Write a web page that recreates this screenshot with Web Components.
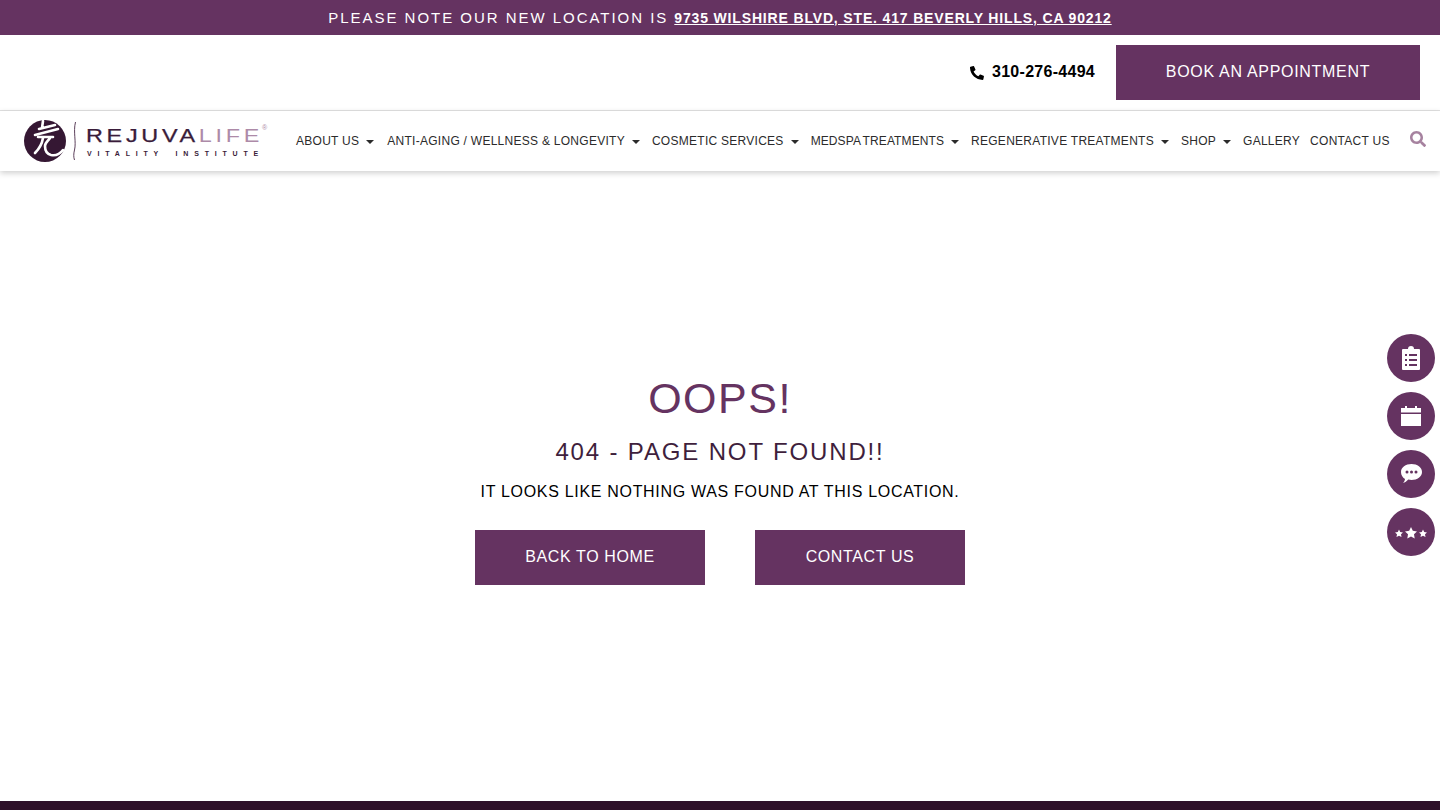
<!DOCTYPE html>
<html lang="en"><head><meta charset="utf-8"><title>Page not found</title>
<style>
html,body{margin:0;padding:0;height:810px;overflow:hidden;background:#fff;font-family:"Liberation Sans",Arial,sans-serif}
body{display:flex;flex-direction:column;position:relative}
</style></head><body>
<site-notice>PLEASE NOTE OUR NEW LOCATION IS <a slot="link" href="#">9735 WILSHIRE BLVD, STE. 417 BEVERLY HILLS, CA 90212</a></site-notice>
<top-bar></top-bar>
<main-nav></main-nav>
<error-panel></error-panel>
<site-footer></site-footer>
<side-actions></side-actions>
<script>
function def(name,html){customElements.define(name,class extends HTMLElement{constructor(){super();this.attachShadow({mode:'open'}).innerHTML=html;}});}
def('site-notice',`<style>:host{display:flex;justify-content:center;align-items:center;gap:6px;height:35px;background:#653361;color:#fff;font-size:15px;letter-spacing:1.97px;flex:none}
::slotted(a){color:#fff;font-weight:700;font-size:14px;letter-spacing:.84px;text-decoration:underline}</style><span><slot></slot></span><slot name="link"></slot>`);
def('top-bar',`<style>:host{display:flex;justify-content:flex-end;align-items:center;height:76px;box-sizing:border-box;padding:0 20px;gap:21px;flex:none;border-bottom:1px solid #e2e2e2}
.ph{display:flex;align-items:center;gap:8px;font-weight:700;font-size:16px;letter-spacing:.28px;color:#000;margin-top:-2px}
svg{width:14px;height:14px;margin-top:3px;transform:scaleX(-1)}
.b{display:flex;align-items:center;justify-content:center;width:304px;height:55px;box-sizing:border-box;padding-bottom:2px;background:#653361;color:#fff;font-size:16px;letter-spacing:.7px;text-decoration:none}</style>
<span class="ph"><svg viewBox="0 0 512 512"><path d="M493 24 389 0c-11-3-23 3-28 14l-48 112c-4 10-1 21 7 28l61 50c-36 76-98 139-175 175l-50-61c-7-8-18-11-28-7L16 359c-11 5-17 17-14 28l24 104c3 11 12 19 23 19 256 0 464-207 464-464 0-11-8-20-20-22z"/></svg>310-276-4494</span><a class="b" href="#">BOOK AN APPOINTMENT</a>`);
def('nav-item',`<style>:host{display:inline-flex;align-items:center;gap:7px;font-size:12px;letter-spacing:.27px;color:#2b2b2b;white-space:nowrap}
i{width:0;height:0;border:4.5px solid transparent;border-top:4.5px solid #2b2b2b;border-bottom:0;margin-top:2px;margin-right:var(--mr,2px);display:var(--caret,block)}</style><slot></slot><i></i>`);
def('main-nav',`<style>:host{display:flex;align-items:center;height:60px;flex:none;background:#fff;box-shadow:0 2px 6px rgba(0,0,0,.2);position:relative;z-index:1;padding:0 14px 0 24px;box-sizing:border-box}
.logo{display:flex;align-items:center;width:272px;flex:none;gap:6px}
.t{display:flex;flex-direction:column;gap:6px;position:relative;color:#3a1c3a;margin-left:3px;width:185px;padding-top:3px}
.n{font-size:18px;line-height:15px;letter-spacing:2.85px;font-weight:400;white-space:nowrap;transform:scaleX(1.3);transform-origin:0 50%;-webkit-text-stroke:.25px #3a1c3a}
.n b{font-weight:400;color:#ad8aa8;-webkit-text-stroke:0}
.v{font-size:7px;line-height:7px;letter-spacing:5.8px;white-space:nowrap;font-weight:700;word-spacing:4px;margin-left:1px}
sup{position:absolute;left:176px;top:-2px;font-size:7px;line-height:8px;color:#ad8aa8}
nav{display:flex;align-items:center;gap:10px;flex:1}
nav nav-item:first-child{--mr:3px}
nav nav-item:nth-child(n+7){--caret:none}
.m{word-spacing:-1px;letter-spacing:.1px}
.s{width:16px;height:16px;margin-left:19px;flex:none;margin-top:-4px}</style>
<div class="logo"><svg width="43" height="44" viewBox="0 0 43 44"><circle cx="21" cy="22" r="21" fill="#351733"/><path d="M19 2l-1 7M15 10l16-4M11 16l23-6M14 18h15M19 19c-1 6-4 11-8 15M26 19c-2 3-5 5-5 8 0 5 2 8 6 9 5 1 9-1 12-5" fill="none" stroke="#fff" stroke-width="2.6" stroke-linecap="round"/></svg>
<svg width="5" height="40" viewBox="0 0 5 40" style="margin-left:-1px"><path d="M3.500 1C1 11 4.500 21 2.500 29 1.500 33 1.500 36 2.500 39" fill="none" stroke="#4a2a48" stroke-width=".9"/></svg>
<div class="t"><span class="n">REJUVA<b>LIFE</b></span><span class="v">VITALITY INSTITUTE</span><sup>®</sup></div></div>
<nav><nav-item>ABOUT US</nav-item><nav-item>ANTI-AGING / WELLNESS &amp; LONGEVITY</nav-item><nav-item>COSMETIC SERVICES</nav-item><nav-item class="m">MEDSPA TREATMENTS</nav-item><nav-item>REGENERATIVE TREATMENTS</nav-item><nav-item>SHOP</nav-item><nav-item>GALLERY</nav-item><nav-item>CONTACT US</nav-item></nav>
<svg class="s" viewBox="0 0 512 512"><path fill="#a6829f" d="M505 443 405 343c-4-4-10-7-17-7h-16c28-35 44-80 44-128C416 93 323 0 208 0S0 93 0 208s93 208 208 208c48 0 93-16 128-44v16c0 7 3 13 7 17l100 100c9 9 25 9 34 0l28-28c9-10 9-25 0-34zM208 336c-71 0-128-57-128-128S137 80 208 80s128 57 128 128-57 128-128 128z"/></svg>`);
def('error-panel',`<style>:host{flex:1;display:flex;flex-direction:column;align-items:center;padding-top:202px;color:#000}
h1{margin:0;font-weight:400;font-size:43px;line-height:50px;letter-spacing:1.5px;color:#653361}
h2{margin:14px 0 0;font-weight:400;font-size:24px;line-height:30px;letter-spacing:1.85px;color:#3f1f3d}
p{margin:16px 0 0;font-size:16px;line-height:18px;letter-spacing:.69px}
div{display:flex;gap:50px;margin-top:29px}
a{display:flex;align-items:center;justify-content:center;height:55px;padding-bottom:2px;box-sizing:border-box;background:#653361;color:#fff;text-decoration:none;font-size:16px;letter-spacing:.62px}
.h{width:230px}.c{width:210px}</style>
<h1>OOPS!</h1><h2>404 - PAGE NOT FOUND!!</h2><p>IT LOOKS LIKE NOTHING WAS FOUND AT THIS LOCATION.</p><div><a class="h" href="#">BACK TO HOME</a><a class="c" href="#">CONTACT US</a></div>`);
def('site-footer',`<style>:host{display:block;height:9px;background:#2e1029;flex:none}</style>`);
def('side-actions',`<style>:host{position:absolute;right:5px;top:334px;display:flex;flex-direction:column;gap:10px;z-index:2}
span{width:48px;height:48px;border-radius:50%;background:#653361;display:flex;align-items:center;justify-content:center}</style>
<span><svg width="18" height="24" viewBox="0 0 18 24"><path fill="#fff" fill-rule="evenodd" d="M1 3h5a3 3 0 0 1 6 0h5a1 1 0 0 1 1 1v19a1 1 0 0 1-1 1H1a1 1 0 0 1-1-1V4a1 1 0 0 1 1-1zM3 8v2h2V8zm4 0v2h8V8zm-4 5v2h2v-2zm4 0v2h8v-2zm-4 5v2h2v-2zm4 0v2h8v-2z"/></svg></span>
<span><svg width="20" height="20" viewBox="0 0 20 20" style="margin-top:-1px"><path fill="#fff" d="M0 8h20v12H0zM0 2h4V0h2v2h8V0h2v2h4v4.500H0z"/></svg></span>
<span><svg width="21" height="20" viewBox="0 0 21 20"><path fill="#fff" fill-rule="evenodd" d="M10.500 0C16.300 0 21 3.500 21 8s-4.700 8-10.500 8c-1.100 0-2.200-.1-3.200-.4C6 17 3.800 19 2 19c1-1 1.900-2.500 2-4C1.600 13.500 0 11 0 8 0 3.500 4.700 0 10.500 0zM6 6.500a1.500 1.500 0 1 0 0 3 1.500 1.500 0 0 0 0-3zm4.500 0a1.500 1.500 0 1 0 0 3 1.500 1.500 0 0 0 0-3zm4.500 0a1.500 1.500 0 1 0 0 3 1.500 1.500 0 0 0 0-3z"/></svg></span>
<span><svg width="32" height="12" viewBox="0 0 32 12" style="margin-top:2px"><path fill="#fff" d="M4 2.500l1.200 2.500 2.800.4-2 1.900.5 2.700L4 8.700 1.500 10 2 7.300 0 5.400 2.800 5zM16 0l1.800 3.800 4.200.6-3 2.900.7 4.200L16 9.500 12.300 11.500l.7-4.200-3-2.900 4.200-.6zM28 2.500l1.200 2.500 2.800.4-2 1.900.5 2.700L28 8.700 25.500 10l.5-2.700-2-1.900 2.800-.4z"/></svg></span>`);
</script></body></html>
